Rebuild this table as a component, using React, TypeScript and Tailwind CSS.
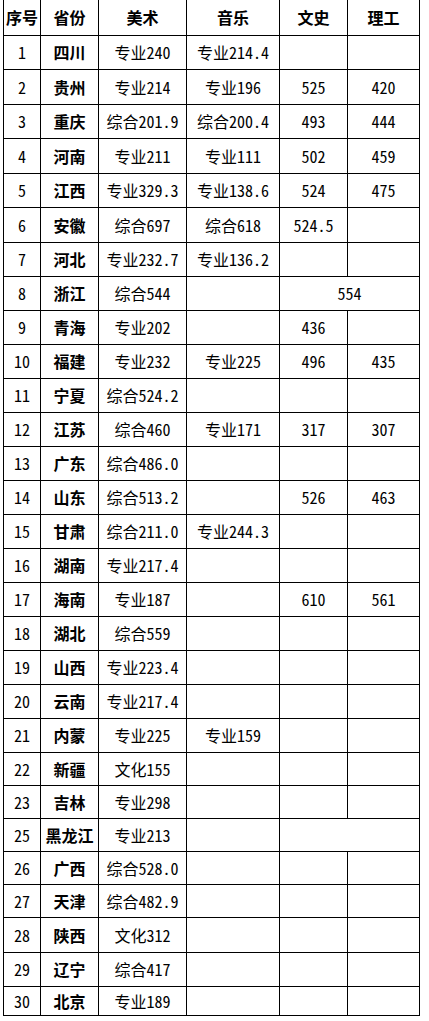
const rows: { no: string; prov: string; art: string; music: string; wen: string; li: string; span?: number; h: string }[] = [
  { no: '1', prov: '四川', art: '专业240', music: '专业214.4', wen: '', li: '', h: 'h-[34px]' },
  { no: '2', prov: '贵州', art: '专业214', music: '专业196', wen: '525', li: '420', h: 'h-[35px]' },
  { no: '3', prov: '重庆', art: '综合201.9', music: '综合200.4', wen: '493', li: '444', h: 'h-[34px]' },
  { no: '4', prov: '河南', art: '专业211', music: '专业111', wen: '502', li: '459', h: 'h-[35px]' },
  { no: '5', prov: '江西', art: '专业329.3', music: '专业138.6', wen: '524', li: '475', h: 'h-[34px]' },
  { no: '6', prov: '安徽', art: '综合697', music: '综合618', wen: '524.5', li: '', h: 'h-[35px]' },
  { no: '7', prov: '河北', art: '专业232.7', music: '专业136.2', wen: '', li: '', h: 'h-[34px]' },
  { no: '8', prov: '浙江', art: '综合544', music: '', wen: '554', li: '', span: 2, h: 'h-[34px]' },
  { no: '9', prov: '青海', art: '专业202', music: '', wen: '436', li: '', h: 'h-[34px]' },
  { no: '10', prov: '福建', art: '专业232', music: '专业225', wen: '496', li: '435', h: 'h-[34px]' },
  { no: '11', prov: '宁夏', art: '综合524.2', music: '', wen: '', li: '', h: 'h-[34px]' },
  { no: '12', prov: '江苏', art: '综合460', music: '专业171', wen: '317', li: '307', h: 'h-[34px]' },
  { no: '13', prov: '广东', art: '综合486.0', music: '', wen: '', li: '', h: 'h-[34px]' },
  { no: '14', prov: '山东', art: '综合513.2', music: '', wen: '526', li: '463', h: 'h-[34px]' },
  { no: '15', prov: '甘肃', art: '综合211.0', music: '专业244.3', wen: '', li: '', h: 'h-[34px]' },
  { no: '16', prov: '湖南', art: '专业217.4', music: '', wen: '', li: '', h: 'h-[34px]' },
  { no: '17', prov: '海南', art: '专业187', music: '', wen: '610', li: '561', h: 'h-[34px]' },
  { no: '18', prov: '湖北', art: '综合559', music: '', wen: '', li: '', h: 'h-[34px]' },
  { no: '19', prov: '山西', art: '专业223.4', music: '', wen: '', li: '', h: 'h-[34px]' },
  { no: '20', prov: '云南', art: '专业217.4', music: '', wen: '', li: '', h: 'h-[34px]' },
  { no: '21', prov: '内蒙', art: '专业225', music: '专业159', wen: '', li: '', h: 'h-[34px]' },
  { no: '22', prov: '新疆', art: '文化155', music: '', wen: '', li: '', h: 'h-[33px]' },
  { no: '23', prov: '吉林', art: '专业298', music: '', wen: '', li: '', h: 'h-[33px]' },
  { no: '25', prov: '黑龙江', art: '专业213', music: '', wen: '', li: '', span: 2, h: 'h-[33px]' },
  { no: '26', prov: '广西', art: '综合528.0', music: '', wen: '', li: '', h: 'h-[33px]' },
  { no: '27', prov: '天津', art: '综合482.9', music: '', wen: '', li: '', h: 'h-[33px]' },
  { no: '28', prov: '陕西', art: '文化312', music: '', wen: '', li: '', h: 'h-[35px]' },
  { no: '29', prov: '辽宁', art: '综合417', music: '', wen: '', li: '', h: 'h-[34px]' },
  { no: '30', prov: '北京', art: '专业189', music: '', wen: '', li: '', h: 'h-[29px]' },
]

const cell = 'border border-black text-center p-0 leading-none'

export default function App() {
  return (
    <div className="min-h-screen bg-white text-black text-[16px] font-['Noto_Sans_Mono_CJK_SC','Noto_Sans_CJK_SC',sans-serif]">
      <table className="ml-[3px] w-[416px] table-fixed border-collapse">
        <colgroup>
          <col className="w-[37px]" />
          <col className="w-[58px]" />
          <col className="w-[88px]" />
          <col className="w-[93px]" />
          <col className="w-[68px]" />
          <col className="w-[72px]" />
        </colgroup>
        <thead>
          <tr className="h-[35px]">
            <th className={`${cell} border-t-0 font-bold`}>序号</th>
            <th className={`${cell} border-t-0 font-bold`}>省份</th>
            <th className={`${cell} border-t-0 font-bold`}>美术</th>
            <th className={`${cell} border-t-0 font-bold`}>音乐</th>
            <th className={`${cell} border-t-0 font-bold`}>文史</th>
            <th className={`${cell} border-t-0 font-bold`}>理工</th>
          </tr>
        </thead>
        <tbody>
          {rows.map((r) => (
            <tr key={r.no} className={r.h}>
              <td className={cell}>{r.no}</td>
              <td className={`${cell} font-bold whitespace-nowrap`}>{r.prov}</td>
              <td className={`${cell} whitespace-nowrap`}>{r.art}</td>
              <td className={`${cell} whitespace-nowrap`}>{r.music}</td>
              {r.span ? (
                <td className={cell} colSpan={2}>{r.wen}</td>
              ) : (
                <>
                  <td className={cell}>{r.wen}</td>
                  <td className={cell}>{r.li}</td>
                </>
              )}
            </tr>
          ))}
        </tbody>
      </table>
    </div>
  )
}
